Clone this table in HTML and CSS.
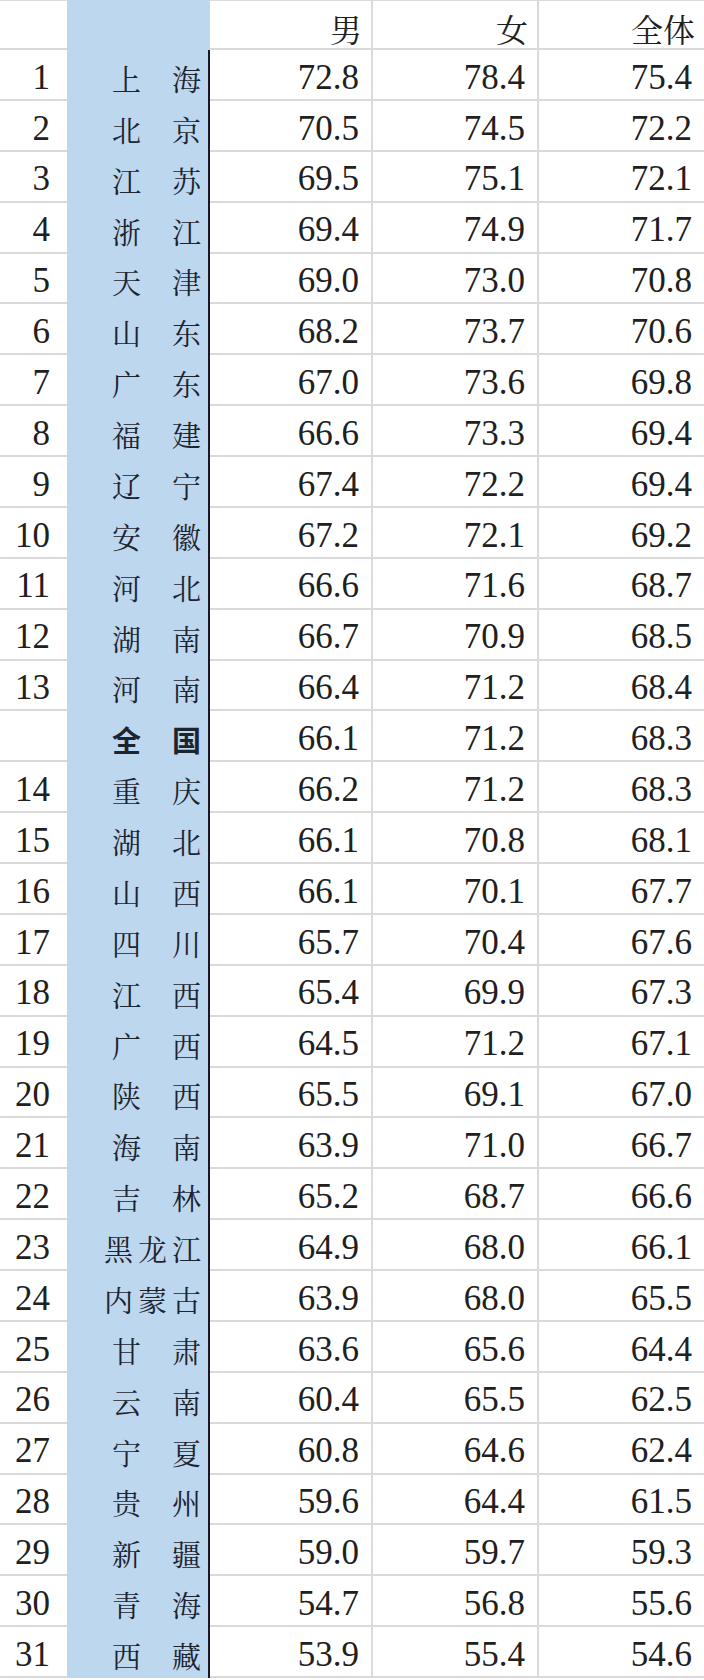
FILE: index.html
```html
<!DOCTYPE html>
<html>
<head>
<meta charset="utf-8">
<title>各省份指标</title>
<link rel="stylesheet" href="styles.css">
</head>
<body>
<div class="sheet">
  <div class="c rank hd"></div><div class="c name hd"></div><div class="c hcell">男</div><div class="c hcell">女</div><div class="c hcell">全体</div>

  <div class="c rank">1</div><div class="c name"><span>上</span><span>海</span></div><div class="c num">72.8</div><div class="c num">78.4</div><div class="c num">75.4</div>
  <div class="c rank">2</div><div class="c name"><span>北</span><span>京</span></div><div class="c num">70.5</div><div class="c num">74.5</div><div class="c num">72.2</div>
  <div class="c rank">3</div><div class="c name"><span>江</span><span>苏</span></div><div class="c num">69.5</div><div class="c num">75.1</div><div class="c num">72.1</div>
  <div class="c rank">4</div><div class="c name"><span>浙</span><span>江</span></div><div class="c num">69.4</div><div class="c num">74.9</div><div class="c num">71.7</div>
  <div class="c rank">5</div><div class="c name"><span>天</span><span>津</span></div><div class="c num">69.0</div><div class="c num">73.0</div><div class="c num">70.8</div>
  <div class="c rank">6</div><div class="c name"><span>山</span><span>东</span></div><div class="c num">68.2</div><div class="c num">73.7</div><div class="c num">70.6</div>
  <div class="c rank">7</div><div class="c name"><span>广</span><span>东</span></div><div class="c num">67.0</div><div class="c num">73.6</div><div class="c num">69.8</div>
  <div class="c rank">8</div><div class="c name"><span>福</span><span>建</span></div><div class="c num">66.6</div><div class="c num">73.3</div><div class="c num">69.4</div>
  <div class="c rank">9</div><div class="c name"><span>辽</span><span>宁</span></div><div class="c num">67.4</div><div class="c num">72.2</div><div class="c num">69.4</div>
  <div class="c rank">10</div><div class="c name"><span>安</span><span>徽</span></div><div class="c num">67.2</div><div class="c num">72.1</div><div class="c num">69.2</div>
  <div class="c rank">11</div><div class="c name"><span>河</span><span>北</span></div><div class="c num">66.6</div><div class="c num">71.6</div><div class="c num">68.7</div>
  <div class="c rank">12</div><div class="c name"><span>湖</span><span>南</span></div><div class="c num">66.7</div><div class="c num">70.9</div><div class="c num">68.5</div>
  <div class="c rank">13</div><div class="c name"><span>河</span><span>南</span></div><div class="c num">66.4</div><div class="c num">71.2</div><div class="c num">68.4</div>
  <div class="c rank"></div><div class="c name bold"><span>全</span><span>国</span></div><div class="c num">66.1</div><div class="c num">71.2</div><div class="c num">68.3</div>
  <div class="c rank">14</div><div class="c name"><span>重</span><span>庆</span></div><div class="c num">66.2</div><div class="c num">71.2</div><div class="c num">68.3</div>
  <div class="c rank">15</div><div class="c name"><span>湖</span><span>北</span></div><div class="c num">66.1</div><div class="c num">70.8</div><div class="c num">68.1</div>
  <div class="c rank">16</div><div class="c name"><span>山</span><span>西</span></div><div class="c num">66.1</div><div class="c num">70.1</div><div class="c num">67.7</div>
  <div class="c rank">17</div><div class="c name"><span>四</span><span>川</span></div><div class="c num">65.7</div><div class="c num">70.4</div><div class="c num">67.6</div>
  <div class="c rank">18</div><div class="c name"><span>江</span><span>西</span></div><div class="c num">65.4</div><div class="c num">69.9</div><div class="c num">67.3</div>
  <div class="c rank">19</div><div class="c name"><span>广</span><span>西</span></div><div class="c num">64.5</div><div class="c num">71.2</div><div class="c num">67.1</div>
  <div class="c rank">20</div><div class="c name"><span>陕</span><span>西</span></div><div class="c num">65.5</div><div class="c num">69.1</div><div class="c num">67.0</div>
  <div class="c rank">21</div><div class="c name"><span>海</span><span>南</span></div><div class="c num">63.9</div><div class="c num">71.0</div><div class="c num">66.7</div>
  <div class="c rank">22</div><div class="c name"><span>吉</span><span>林</span></div><div class="c num">65.2</div><div class="c num">68.7</div><div class="c num">66.6</div>
  <div class="c rank">23</div><div class="c name three"><span>黑</span><span>龙</span><span>江</span></div><div class="c num">64.9</div><div class="c num">68.0</div><div class="c num">66.1</div>
  <div class="c rank">24</div><div class="c name three"><span>内</span><span>蒙</span><span>古</span></div><div class="c num">63.9</div><div class="c num">68.0</div><div class="c num">65.5</div>
  <div class="c rank">25</div><div class="c name"><span>甘</span><span>肃</span></div><div class="c num">63.6</div><div class="c num">65.6</div><div class="c num">64.4</div>
  <div class="c rank">26</div><div class="c name"><span>云</span><span>南</span></div><div class="c num">60.4</div><div class="c num">65.5</div><div class="c num">62.5</div>
  <div class="c rank">27</div><div class="c name"><span>宁</span><span>夏</span></div><div class="c num">60.8</div><div class="c num">64.6</div><div class="c num">62.4</div>
  <div class="c rank">28</div><div class="c name"><span>贵</span><span>州</span></div><div class="c num">59.6</div><div class="c num">64.4</div><div class="c num">61.5</div>
  <div class="c rank">29</div><div class="c name"><span>新</span><span>疆</span></div><div class="c num">59.0</div><div class="c num">59.7</div><div class="c num">59.3</div>
  <div class="c rank">30</div><div class="c name"><span>青</span><span>海</span></div><div class="c num">54.7</div><div class="c num">56.8</div><div class="c num">55.6</div>
  <div class="c rank">31</div><div class="c name"><span>西</span><span>藏</span></div><div class="c num">53.9</div><div class="c num">55.4</div><div class="c num">54.6</div>
</div>
</body>
</html>
```

FILE: styles.css
```css
html, body {
  margin: 0;
  padding: 0;
  background: #ffffff;
}

.sheet {
  display: grid;
  grid-template-columns: 67px 143px 163px 166px 165px;
  grid-template-rows: 50px repeat(32, 50.875px);
  width: 704px;
  color: #222;
  font-family: "Liberation Serif", serif;
  box-shadow: inset 0 1px 0 #dcdcdc;
}

.c {
  box-sizing: border-box;
  display: flex;
  align-items: flex-end;
  justify-content: flex-end;
  border-bottom: 2px solid #dadada;
  border-right: 2px solid #dadada;
  min-width: 0;
}

.rank,
.num {
  font-family: "Liberation Serif", serif;
  font-size: 35px;
  line-height: 1.15;
  color: #202020;
}

.rank {
  padding: 0 17px 1px 0;
  border-right: none;
}

.num {
  padding: 0 12px 1px 0;
}

.hcell {
  font-family: "Noto Serif CJK SC", "Noto Sans CJK SC", serif;
  font-size: 32px;
  line-height: 1;
  padding: 0 9px 4px 0;
  color: #1e1e1e;
}

.name {
  background: #bdd7ee;
  border-bottom: none;
  border-right: 2px solid #161a22;
  justify-content: space-between;
  font-family: "Noto Serif CJK SC", "Noto Sans CJK SC", serif;
  font-size: 29px;
  line-height: 1;
  color: #1c2430;
  padding: 0 7px 8px 45px;
}

.name.hd {
  border-right: 2px solid #bdd7ee;
}

.name.three {
  padding-left: 37px;
}

.name.bold {
  font-family: "Noto Sans CJK SC", sans-serif;
  font-weight: 700;
}

.c:nth-child(5n) {
  border-right: none;
}
```
